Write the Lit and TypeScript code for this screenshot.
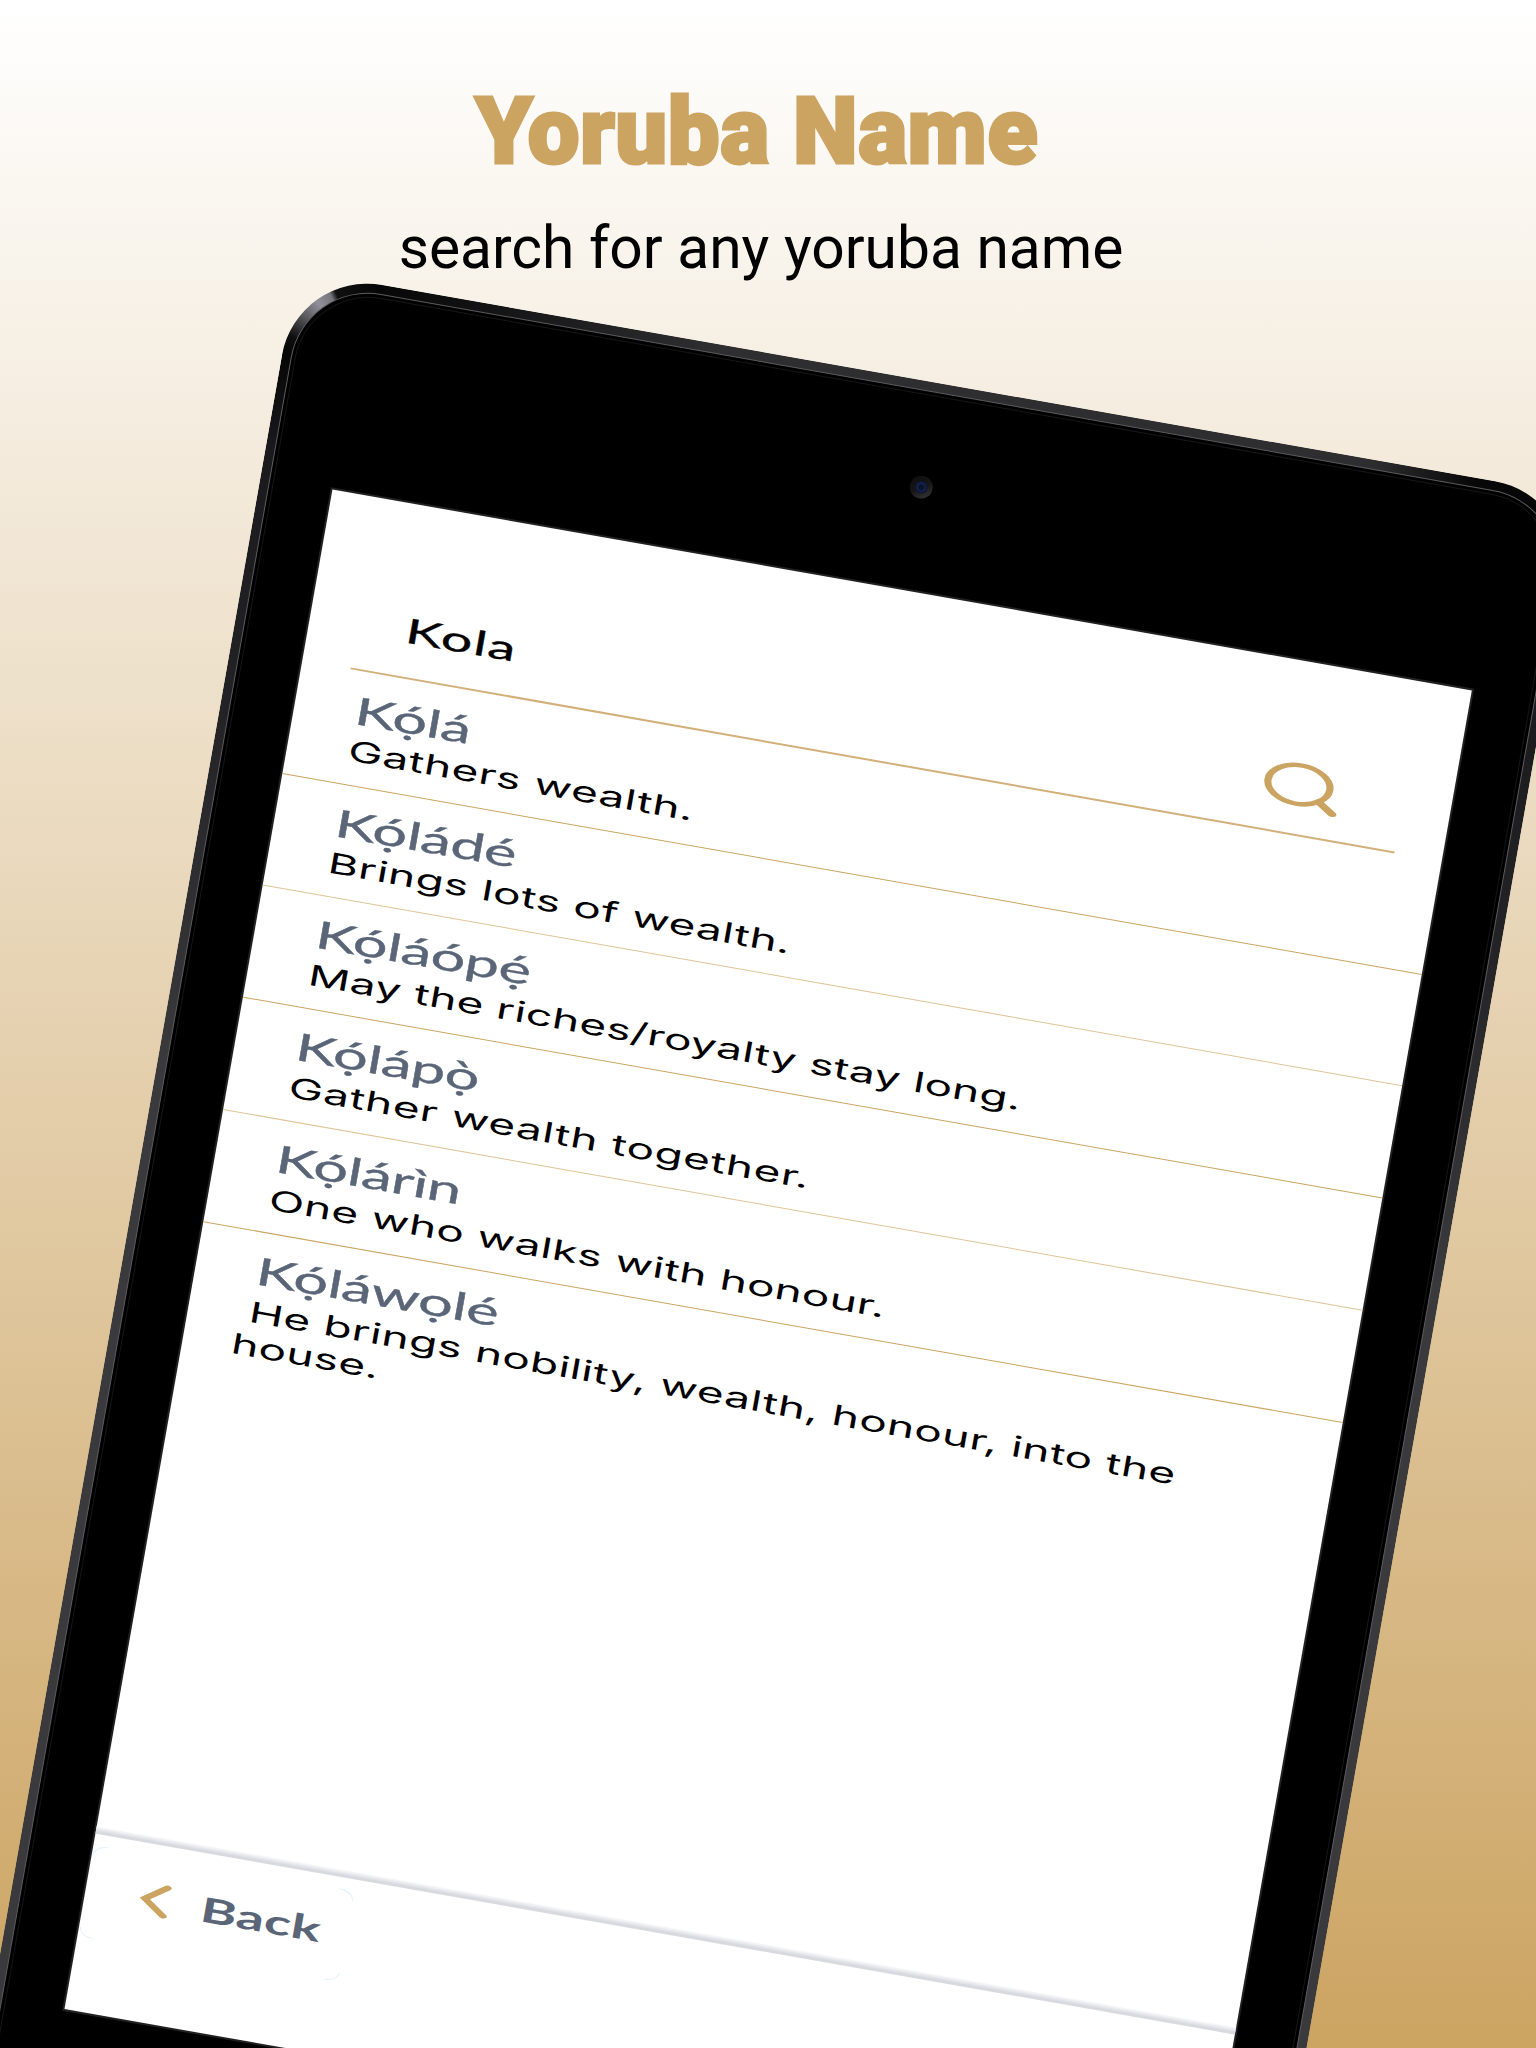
import { LitElement, html, css, svg } from "lit";
import { customElement, property } from "lit/decorators.js";
import { classMap } from "lit/directives/class-map.js";
import { styleMap } from "lit/directives/style-map.js";

interface NameEntry {
  name: string;
  meaning: string;
  tracking: number;
  faint?: boolean;
}

const ENTRIES: NameEntry[] = [
  { name: "Kọ́lá", meaning: "Gathers wealth.", tracking: 0.31 },
  { name: "Kọ́ládé", meaning: "Brings lots of wealth.", tracking: 0.26, faint: true },
  { name: "Kọ́láópẹ́", meaning: "May the riches/royalty stay long.", tracking: 0.17 },
  { name: "Kọ́lápọ̀", meaning: "Gather wealth together.", tracking: 0.41, faint: true },
  { name: "Kọ́lárìn", meaning: "One who walks with honour.", tracking: 0.21 },
  { name: "Kọ́láwọlé", meaning: "He brings nobility, wealth, honour, into the house.", tracking: 0.26 },
];

// The app is laid out for a phone and stretched sideways to fill the tablet.
const wide = css`
  .wide {
    display: block;
    transform: scaleX(1.6243);
    transform-origin: 0 0;
  }
`;

@customElement("name-row")
class NameRow extends LitElement {
  @property({ attribute: false }) entry!: NameEntry;
  @property({ type: Boolean }) last = false;

  static styles = [
    wide,
    css`
      :host {
        display: block;
      }
      .row {
        box-sizing: border-box;
        height: 113.95px;
        padding: 15px 0 0 49px;
        border-bottom: 1px solid #cca462;
      }
      .faint {
        border-bottom-color: #dfc497;
      }
      .last {
        border-bottom: none;
      }
      .text {
        width: 640px;
      }
      .name {
        font: 400 38px/45.6px Lato, "Open Sans", sans-serif;
        -webkit-text-stroke: 0.35px #5a6678;
        color: #5a6678;
        letter-spacing: -0.25px;
        text-indent: 7.4px;
        margin-bottom: 1.7px;
      }
      .meaning {
        font: 400 28.5px/34.2px Inter, sans-serif;
        color: #000;
        text-indent: 7.4px;
      }
    `,
  ];

  render() {
    const { name, meaning, faint, tracking } = this.entry;
    return html`<div class=${classMap({ row: true, faint: !!faint, last: this.last })}>
      <div class="wide text">
        <div class="name">${name}</div>
        <div class="meaning" style=${styleMap({ letterSpacing: `${tracking}px` })}>${meaning}</div>
      </div>
    </div>`;
  }
}

@customElement("search-bar")
class SearchBar extends LitElement {
  static styles = [
    wide,
    css`
      :host {
        display: block;
        padding: 0 48.5px 0.3px 49px;
      }
      .bar {
        box-sizing: border-box;
        height: 174px;
        padding: 99.6px 62px 0 48.8px;
        border-bottom: 2px solid #d3b07a;
        display: flex;
        justify-content: space-between;
        align-items: flex-start;
      }
      .query {
        margin-top: 5px;
        font: 400 34.2px/40px Lato, "Open Sans", sans-serif;
        -webkit-text-stroke: 0.35px #000;
        letter-spacing: 0.9px;
        color: #000;
      }
      .icon {
        display: block;
        width: 80.3px;
        height: 49.4px;
      }
    `,
  ];

  render() {
    return html`<div class="bar">
      <div class="wide query">Kola</div>
      <svg class="icon" viewBox="0 0 26 26" preserveAspectRatio="none" fill="none" stroke="#cca462">
        <circle cx="12" cy="12" r="10.15" stroke-width="2.35" />
        <path d="M19.3 19.3 24.2 24.4" stroke-width="2.9" stroke-linecap="round" />
      </svg>
    </div>`;
  }
}

@customElement("bottom-bar")
class BottomBar extends LitElement {
  static styles = [
    wide,
    css`
      :host {
        display: block;
      }
      .edge {
        height: 8px;
        background: linear-gradient(#fff, #e6e7eb 45%, #d6d8de 75%, #dadce2);
      }
      .area {
        box-sizing: border-box;
        height: 178.6px;
        padding-top: 11px;
      }
      .back {
        box-sizing: border-box;
        position: relative;
        width: 265.5px;
        height: 93.5px;
        padding: 0 0 5px 54px;
        display: flex;
        align-items: center;
      }
      .corners {
        position: absolute;
        inset: 0;
        width: 100%;
        height: 100%;
      }
      .chevron {
        width: 31px;
        height: 36px;
        flex: none;
      }
      .label {
        margin-left: 32px;
        font: 700 34.2px/40px Lato, "Open Sans", sans-serif;
        letter-spacing: 0.15px;
        color: #5a6678;
      }
    `,
  ];

  render() {
    return html`<div class="edge"></div>
      <div class="area">
        <div class="back">
          <svg class="corners" viewBox="0 0 265.5 93.5" fill="none" stroke="#e3f0fa">
            ${[
              "M1 11Q3 1 15 .5",
              "M250 .5Q264 2 265 11",
              "M265 83Q263 92 250 93",
              "M1 83Q3 92 15 93",
            ].map((d) => svg`<path d=${d} />`)}
          </svg>
          <svg class="chevron" viewBox="0 0 10 19" preserveAspectRatio="none" fill="none" stroke="#cca462">
            <path d="M8.6 2.1 1.9 9.5 8.6 17.1" stroke-width="2.5" stroke-linecap="round" />
          </svg>
          <span class="wide label">Back</span>
        </div>
      </div>`;
  }
}

@customElement("app-root")
class AppRoot extends LitElement {
  static styles = css`
    :host {
      display: block;
    }
    .poster {
      position: relative;
      width: 1536px;
      height: 2048px;
      overflow: hidden;
      background: linear-gradient(#fff, #cca462);
      font-family: Roboto, sans-serif;
    }
    .heading {
      display: flex;
      flex-direction: column;
      align-items: center;
      padding-top: 78px;
      white-space: nowrap;
    }
    .title {
      margin: 0;
      font-size: 92px;
      line-height: 108px;
      font-weight: 900;
      letter-spacing: 0.55px;
      color: #cca462;
      -webkit-text-stroke: 3px #cca462;
      padding-right: 23px;
    }
    .initial {
      letter-spacing: -5px;
    }
    .subtitle {
      margin: 28px 0 0;
      font-size: 58.7px;
      line-height: 68px;
      color: #000;
      padding-right: 14px;
    }
    .tablet {
      position: absolute;
      left: 297.3px;
      top: 269.6px;
      box-sizing: border-box;
      width: 1302.7px;
      height: 1964px;
      border-radius: 86.5px;
      transform: rotate(10deg);
      transform-origin: 0 0;
      padding: 8.7px;
      background:
        conic-gradient(from 270deg at 86.5px 86.5px, #050506 0deg, #0e0e0f 14deg, #55555a 30deg, #918f98 44deg, #77767c 54deg, #101011 58deg, #060607 90deg, transparent 90deg) 0 0 / 86.5px 86.5px no-repeat,
        linear-gradient(90deg, #070708 86px, #2e2e30 420px, #2e2e30 1090px, #070708 1200px) 0 0 / 100% 14px no-repeat,
        linear-gradient(#070708 90px, #1a1a1c 180px, #232325 450px, #3a3a3c 800px, #3a3a3c);
    }
    .glass {
      position: relative;
      box-sizing: border-box;
      height: 100%;
      border-radius: 78px;
      border: 1px solid #5c5c5f;
      background: #000;
      padding: 200.6px 62.9px;
    }
    .groove {
      position: absolute;
      inset: 3px;
      border-radius: 75px;
      border: 1px solid #161617;
    }
    .camera {
      position: absolute;
      left: 631px;
      top: 84px;
      width: 23px;
      height: 23px;
      border-radius: 50%;
      background:
        radial-gradient(circle, #0a1226 0 2px, #14234d 4px, #0a1430 6px, transparent 6.5px),
        linear-gradient(145deg, #0c0c0c, #161616 50%, #3c3c3c);
    }
    .screen {
      position: relative;
      display: flex;
      flex-direction: column;
      width: 1157.5px;
      height: 1543px;
      background: #fff;
      box-shadow: 0 0 0 2px #212122;
    }
    .list {
      flex: 1;
      min-height: 0;
    }
  `;

  render() {
    return html`<div class="poster">
      <header class="heading">
        <h1 class="title"><span class="initial">Y</span>oruba Name</h1>
        <p class="subtitle">search for any yoruba name</p>
      </header>
      <div class="tablet">
        <div class="glass">
          <div class="groove"></div>
          <div class="camera"></div>
          <main class="screen">
            <search-bar></search-bar>
            <div class="list">
              ${ENTRIES.map(
                (entry, i) => html`<name-row .entry=${entry} ?last=${i === ENTRIES.length - 1}></name-row>`
              )}
            </div>
            <bottom-bar></bottom-bar>
          </main>
        </div>
      </div>
    </div>`;
  }
}
